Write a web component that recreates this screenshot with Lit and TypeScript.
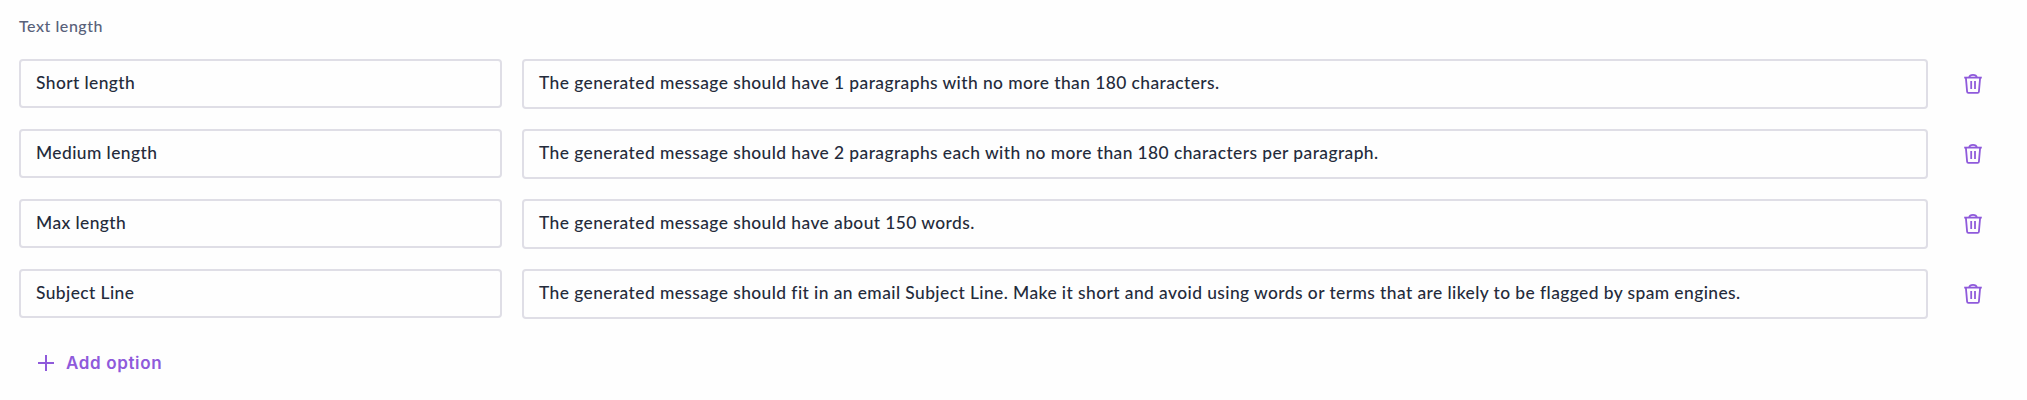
import { LitElement, html, css } from "lit";
import { customElement, state } from "lit/decorators.js";

interface Option {
  name: string;
  prompt: string;
}

@customElement("trash-icon")
class TrashIcon extends LitElement {
  static styles = css`
    :host { display: block; width: 24px; height: 24px; }
    svg { display: block; }
  `;
  render() {
    return html`<svg width="24" height="24" viewBox="0 0 24 24" fill="none" stroke="#8f5adb" stroke-width="1.8" stroke-linejoin="round">
      <path d="M3.2 5.6H20.8" />
      <path d="M8.3 5.2C8.6 3.5 9.8 2.9 12 2.9S15.4 3.5 15.7 5.2" />
      <path d="M4.9 5.8L6.1 19.7Q6.2 20.9 7.4 20.9H16.6Q17.8 20.9 17.9 19.7L19.1 5.8" />
      <path d="M10.2 9V17M14 9V17" />
    </svg>`;
  }
}

@customElement("app-root")
class AppRoot extends LitElement {
  static styles = css`
    :host {
      display: block;
      box-sizing: border-box;
      height: 400px;
      padding: 15px 36px 0 19px;
      background: #fefefe;
      color: #242b3b;
      font: 500 17.4px/24px Lato, sans-serif;
      letter-spacing: 0.42px;
    }
    .label {
      height: 44px;
      color: #58617a;
      font-size: 16px;
      line-height: 21px;
      letter-spacing: 0.54px;
    }
    .rows {
      display: grid;
      gap: 20px;
    }
    .row {
      display: grid;
      grid-template-columns: 483px 1406px 24px;
      column-gap: 20px;
      align-items: start;
      height: 50px;
    }
    .field {
      box-sizing: border-box;
      height: 50px;
      padding: 10px 15px;
      border: 2px solid #dfdee6;
      border-radius: 4px;
      background: #fefefe;
      white-space: nowrap;
    }
    .name { height: 49px; }
    .remove {
      display: block;
      margin: 13px 0 0 13px;
      padding: 0;
      border: 0;
      background: none;
    }
    .add {
      display: flex;
      align-items: center;
      gap: 12px;
      margin: 32px 0 0 19px;
      padding: 0;
      border: 0;
      background: none;
      color: #8f5adb;
      font: 600 17px/24px Inter, sans-serif;
      letter-spacing: 0.65px;
    }
  `;

  @state() private options: Option[] = [
    { name: "Short length", prompt: "The generated message should have 1 paragraphs with no more than 180 characters." },
    { name: "Medium length", prompt: "The generated message should have 2 paragraphs each with no more than 180 characters per paragraph." },
    { name: "Max length", prompt: "The generated message should have about 150 words." },
    { name: "Subject Line", prompt: "The generated message should fit in an email Subject Line. Make it short and avoid using words or terms that are likely to be flagged by spam engines." },
  ];

  render() {
    return html`
      <div class="label">Text length</div>
      <div class="rows">
        ${this.options.map((o) => html`
          <div class="row">
            <div class="field name">${o.name}</div>
            <div class="field">${o.prompt}</div>
            <button class="remove" aria-label="Remove"><trash-icon></trash-icon></button>
          </div>`)}
      </div>
      <button class="add">
        <svg width="16" height="16" viewBox="0 0 16 16" stroke="#8f5adb" stroke-width="2"><path d="M8 0V16M0 8H16" /></svg>
        <span>Add option</span>
      </button>
    `;
  }
}
